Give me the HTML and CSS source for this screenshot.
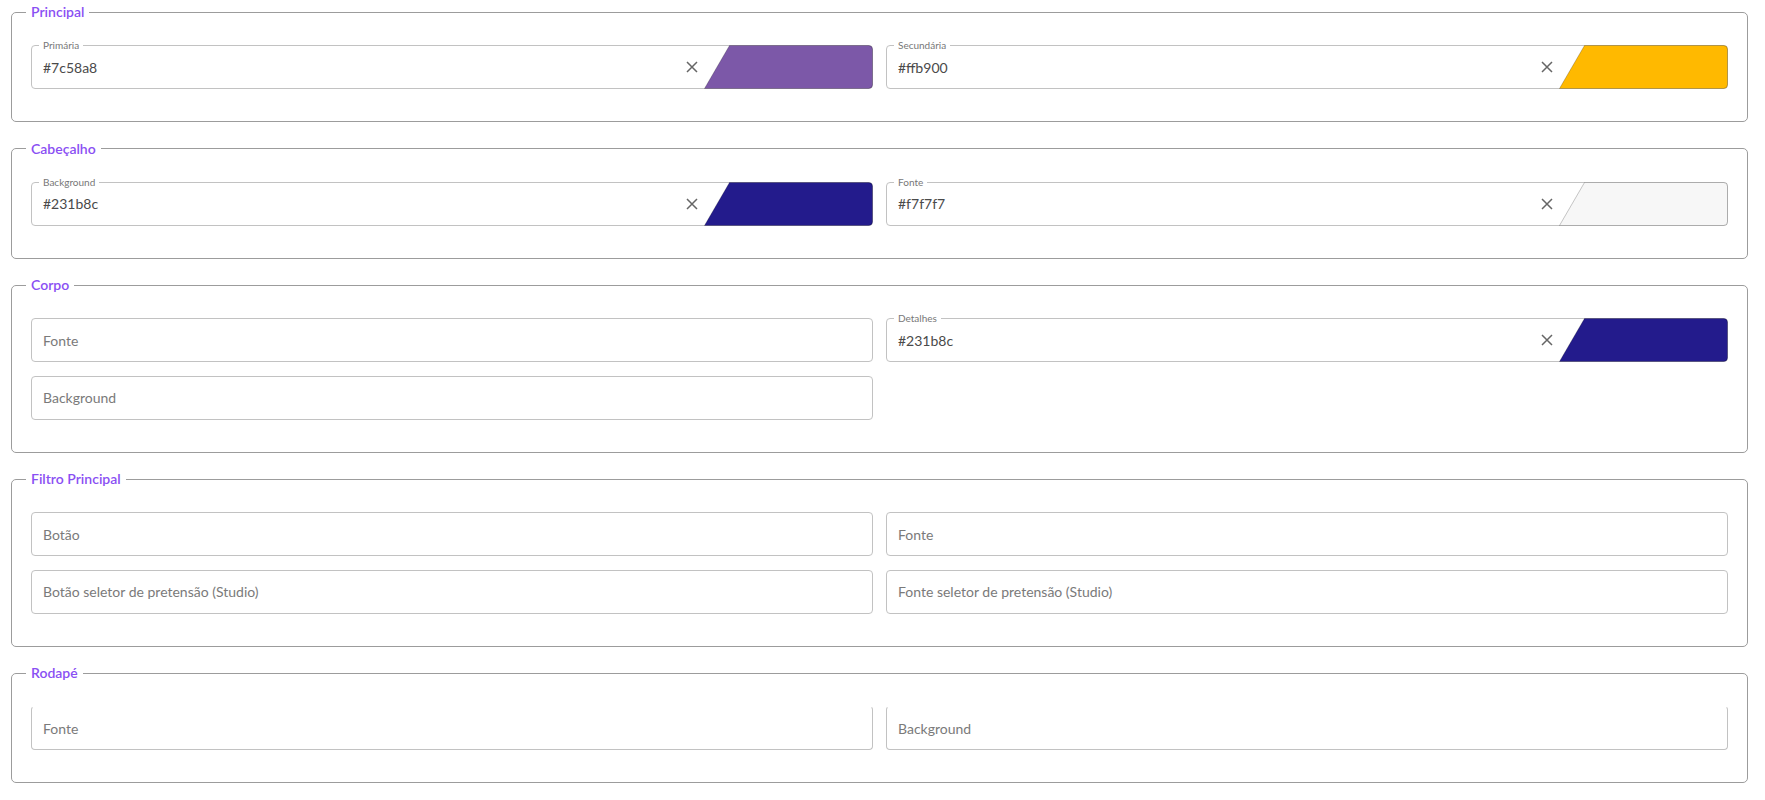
FILE: index.html
```html
<!DOCTYPE html>
<html lang="pt-BR">
<head>
<meta charset="utf-8">
<title>Cores</title>
<link rel="stylesheet" href="styles.css">
</head>
<body>
<main class="page">

  <fieldset class="group">
    <legend class="group-title">Principal</legend>
    <div class="grid">
      <div class="field filled">
        <span class="field-label">Primária</span>
        <span class="field-value">#7c58a8</span>
        <button class="clear" type="button" aria-label="Limpar"><svg viewBox="0 0 12 12" width="12" height="12"><path d="M1 1L11 11M11 1L1 11"/></svg></button>
        <span class="swatch" style="--swatch:#7c58a8"><svg viewBox="0 0 169 44" preserveAspectRatio="none"><path d="M25.5 0.5H164.5A4 4 0 0 1 168.5 4.5V39.5A4 4 0 0 1 164.5 43.5H0.5Z"/></svg></span>
      </div>
      <div class="field filled">
        <span class="field-label">Secundária</span>
        <span class="field-value">#ffb900</span>
        <button class="clear" type="button" aria-label="Limpar"><svg viewBox="0 0 12 12" width="12" height="12"><path d="M1 1L11 11M11 1L1 11"/></svg></button>
        <span class="swatch" style="--swatch:#ffb900"><svg viewBox="0 0 169 44" preserveAspectRatio="none"><path d="M25.5 0.5H164.5A4 4 0 0 1 168.5 4.5V39.5A4 4 0 0 1 164.5 43.5H0.5Z"/></svg></span>
      </div>
    </div>
  </fieldset>

  <fieldset class="group">
    <legend class="group-title">Cabeçalho</legend>
    <div class="grid">
      <div class="field filled">
        <span class="field-label">Background</span>
        <span class="field-value">#231b8c</span>
        <button class="clear" type="button" aria-label="Limpar"><svg viewBox="0 0 12 12" width="12" height="12"><path d="M1 1L11 11M11 1L1 11"/></svg></button>
        <span class="swatch" style="--swatch:#231b8c"><svg viewBox="0 0 169 44" preserveAspectRatio="none"><path d="M25.5 0.5H164.5A4 4 0 0 1 168.5 4.5V39.5A4 4 0 0 1 164.5 43.5H0.5Z"/></svg></span>
      </div>
      <div class="field filled">
        <span class="field-label">Fonte</span>
        <span class="field-value">#f7f7f7</span>
        <button class="clear" type="button" aria-label="Limpar"><svg viewBox="0 0 12 12" width="12" height="12"><path d="M1 1L11 11M11 1L1 11"/></svg></button>
        <span class="swatch" style="--swatch:#f7f7f7"><svg viewBox="0 0 169 44" preserveAspectRatio="none"><path d="M25.5 0.5H164.5A4 4 0 0 1 168.5 4.5V39.5A4 4 0 0 1 164.5 43.5H0.5Z"/></svg></span>
      </div>
    </div>
  </fieldset>

  <fieldset class="group">
    <legend class="group-title">Corpo</legend>
    <div class="grid">
      <div class="field"><span class="placeholder">Fonte</span></div>
      <div class="field filled">
        <span class="field-label">Detalhes</span>
        <span class="field-value">#231b8c</span>
        <button class="clear" type="button" aria-label="Limpar"><svg viewBox="0 0 12 12" width="12" height="12"><path d="M1 1L11 11M11 1L1 11"/></svg></button>
        <span class="swatch" style="--swatch:#231b8c"><svg viewBox="0 0 169 44" preserveAspectRatio="none"><path d="M25.5 0.5H164.5A4 4 0 0 1 168.5 4.5V39.5A4 4 0 0 1 164.5 43.5H0.5Z"/></svg></span>
      </div>
      <div class="field"><span class="placeholder">Background</span></div>
    </div>
  </fieldset>

  <fieldset class="group">
    <legend class="group-title">Filtro Principal</legend>
    <div class="grid">
      <div class="field"><span class="placeholder">Botão</span></div>
      <div class="field"><span class="placeholder">Fonte</span></div>
      <div class="field"><span class="placeholder">Botão seletor de pretensão (Studio)</span></div>
      <div class="field"><span class="placeholder">Fonte seletor de pretensão (Studio)</span></div>
    </div>
  </fieldset>

  <fieldset class="group">
    <legend class="group-title">Rodapé</legend>
    <div class="grid">
      <div class="field open-top"><span class="placeholder">Fonte</span></div>
      <div class="field open-top"><span class="placeholder">Background</span></div>
    </div>
  </fieldset>

</main>
</body>
</html>
```

FILE: styles.css
```css
* { box-sizing: border-box; }

html, body {
  margin: 0;
  background: #ffffff;
}

body {
  font-family: Lato, "Noto Sans", "Liberation Sans", sans-serif;
  color: #444;
}

.page {
  padding: 4px 17px 0 11px;
  display: flex;
  flex-direction: column;
  gap: 18.5px;
}

.group {
  margin: 0;
  min-width: 0;
  border: 1px solid #9c9c9c;
  border-radius: 5px;
  padding: 25px 19px 32px 19px;
}

.group-title {
  margin-left: -5px;
  padding: 0 5px;
  font-size: 14px;
  line-height: 16px;
  font-weight: 600;
  color: #8a4ff3;
}

.grid {
  display: grid;
  grid-template-columns: 1fr 1fr;
  column-gap: 13px;
  row-gap: 13.5px;
}

.field {
  position: relative;
  display: flex;
  align-items: center;
  height: 44px;
  border: 1px solid #c2c2c2;
  border-radius: 4px;
  padding-left: 11px;
  font-size: 14px;
}

.field.open-top {
  border-top-color: transparent;
}

.field-label {
  position: absolute;
  top: -7px;
  left: 7px;
  padding: 0 4px;
  background: #ffffff;
  font-size: 10px;
  line-height: 12px;
  color: #777;
}

.field-value {
  flex: 1;
  color: #4a4a4a;
}

.placeholder {
  flex: 1;
  color: #7a7a7a;
}

.clear {
  width: 24px;
  height: 24px;
  margin: 0;
  padding: 0;
  border: 0;
  background: transparent;
  display: flex;
  align-items: center;
  justify-content: center;
}

.clear svg path {
  stroke: #666;
  stroke-width: 1.5;
  fill: none;
}

.swatch {
  align-self: stretch;
  width: 169px;
  margin: -1px -1px -1px 0;
  display: block;
}

.swatch svg {
  display: block;
  width: 100%;
  height: 100%;
}

.swatch svg path {
  fill: var(--swatch);
  stroke: rgba(0, 0, 0, 0.22);
  stroke-width: 1;
}
```
